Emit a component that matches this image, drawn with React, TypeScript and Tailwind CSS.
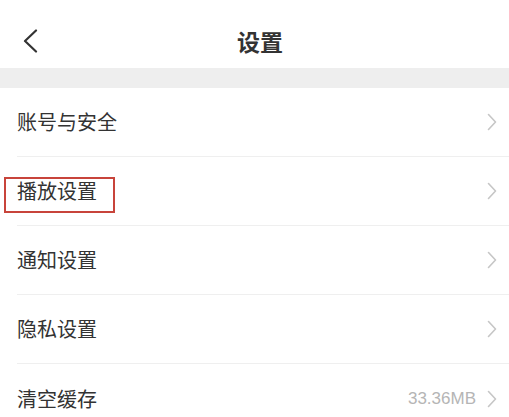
import React from "react";

const font = { fontFamily: '"Noto Sans CJK SC", "Noto Sans", sans-serif' };

function Chevron() {
  return (
    <svg width="10" height="18" viewBox="0 0 10 18" className="shrink-0">
      <path d="M1.5 1.5 L8.5 9 L1.5 16.5" fill="none" stroke="#c6c6c6" strokeWidth="1.6" strokeLinecap="round" strokeLinejoin="round" />
    </svg>
  );
}

function Row({ label, value, highlight, last }: { label: string; value?: string; highlight?: boolean; last?: boolean }) {
  return (
    <div className="relative pl-[17px] h-[69px]">
      <div className={`flex h-full items-center justify-between pr-[12px] ${last ? "" : "border-b border-[#efefef]"}`}>
        <span className="text-[20px] leading-none text-[#333333]">{label}</span>
        <div className="flex items-center gap-[11px]">
          {value && (
            <span className="text-[17px] leading-none text-[#b5b5b5]" style={{ fontFamily: '"Liberation Sans", Arial, sans-serif' }}>
              {value}
            </span>
          )}
          <Chevron />
        </div>
      </div>
      {highlight && (
        <div className="absolute left-[4px] top-[20px] w-[111px] h-[36px] border-2 border-[#c8443b]" />
      )}
    </div>
  );
}

export default function App() {
  return (
    <div className="w-[509px] h-[417px] overflow-hidden bg-white" style={font}>
      <div className="grid grid-cols-[1fr_auto_1fr] items-center h-[68px] pt-[14px]">
        <div className="pl-[23px] flex items-center">
          <svg width="15" height="24" viewBox="0 0 15 24">
            <path d="M13 1.5 L2 12 L13 22.5" fill="none" stroke="#333333" strokeWidth="2.2" strokeLinecap="round" strokeLinejoin="round" />
          </svg>
        </div>
        <div className="pl-[11px] text-[23px] font-bold text-[#333333] leading-none">设置</div>
        <div />
      </div>
      <div className="h-[20px] bg-[#eeeeee]" />
      <Row label="账号与安全" />
      <Row label="播放设置" highlight />
      <Row label="通知设置" />
      <Row label="隐私设置" />
      <Row label="清空缓存" value="33.36MB" last />
    </div>
  );
}
